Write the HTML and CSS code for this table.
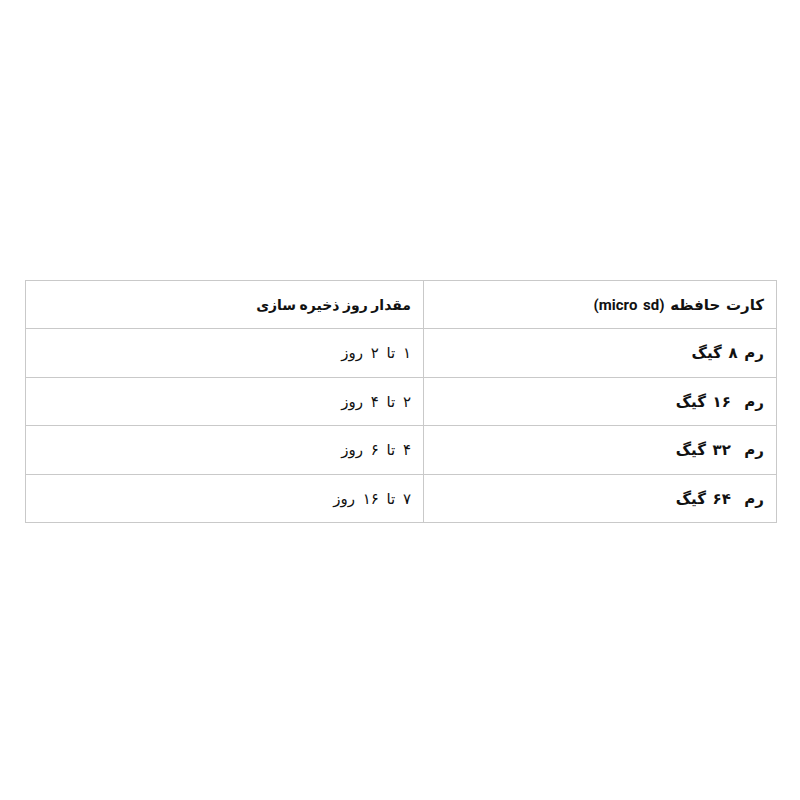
FILE: index.html
```html
<!DOCTYPE html>
<html lang="fa" dir="rtl">
<head>
<meta charset="utf-8">
<link rel="stylesheet" href="styles.css">
</head>
<body>
<div class="wrap">
<table class="spec">
<colgroup><col class="c1"><col class="c2"></colgroup>
<thead>
<tr class="r48"><th>کارت حافظه (micro sd)</th><th class="h2">مقدار روز ذخیره سازی</th></tr>
</thead>
<tbody>
<tr class="r49"><td class="cap">رم ۸ گیگ</td><td>۱ تا ۲ روز</td></tr>
<tr class="r48"><td class="cap">رم&nbsp; ۱۶ گیگ</td><td>۲ تا ۴ روز</td></tr>
<tr class="r49"><td class="cap">رم&nbsp; ۳۲ گیگ</td><td>۴ تا ۶ روز</td></tr>
<tr class="r48"><td class="cap">رم&nbsp; ۶۴ گیگ</td><td>۷ تا ۱۶ روز</td></tr>
</tbody>
</table>
</div>
</body>
</html>
```
FILE: styles.css
```css
html, body {
  margin: 0;
  padding: 0;
  background: #ffffff;
}
.wrap {
  padding: 280px 23px 0 0;
  display: flex;
  justify-content: flex-start;
}
.spec {
  border-collapse: collapse;
  table-layout: fixed;
  width: 751px;
  font-family: Roboto, "DejaVu Sans", sans-serif;
  font-size: 15px;
  color: #111111;
}
.c1 { width: 353px; }
.c2 { width: 398px; }
.spec th, .spec td {
  border: 1px solid #c9c9c9;
  padding: 0 12px;
  text-align: right;
  vertical-align: middle;
  word-spacing: 2px;
}
.spec th { font-weight: bold; }
.spec th.h2 { font-size: 14px; word-spacing: 0; }
.spec td { font-weight: normal; word-spacing: 4px; }
.spec td.cap { font-weight: bold; word-spacing: 3px; }
.r48 { height: 48px; }
.r49 { height: 49px; }
```
